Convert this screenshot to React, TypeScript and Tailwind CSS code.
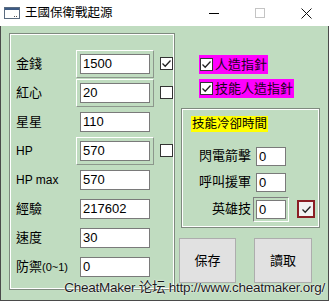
import React from "react";

const cjk = "font-['Liberation_Sans','Noto_Sans_CJK_TC',sans-serif]";

type Row = {
  label: string;
  suffix?: string;
  value: string;
  frame?: boolean;
  check?: "on" | "off";
  latin?: boolean;
};

const rows: Row[] = [
  { label: "金錢", value: "1500", frame: true, check: "on" },
  { label: "紅心", value: "20", frame: true, check: "off" },
  { label: "星星", value: "110" },
  { label: "HP", value: "570", frame: true, check: "off", latin: true },
  { label: "HP max", value: "570", latin: true },
  { label: "經驗", value: "217602" },
  { label: "速度", value: "30" },
  { label: "防禦", suffix: "(0~1)", value: "0" },
];

function Tick() {
  return (
    <svg width="11" height="11" viewBox="0 0 11 11">
      <polyline points="1.5,5.5 4.2,8.2 9.5,2.5" fill="none" stroke="#222" strokeWidth="1.3" />
    </svg>
  );
}

function CheckBox({ on }: { on: boolean }) {
  return (
    <div className="w-[13px] h-[13px] bg-white border border-[#333] flex items-center justify-center">
      {on && <Tick />}
    </div>
  );
}

function TitleBar() {
  return (
    <div className="h-[26px] bg-white flex items-center shrink-0">
      <svg width="16" height="12" viewBox="0 0 16 12" className="ml-[4px]">
        <rect x="0.5" y="0.5" width="15" height="11" fill="#fff" stroke="#5a6b80" />
        <rect x="1" y="1" width="14" height="2" fill="#3c5a84" />
        <rect x="10" y="9" width="1" height="1" fill="#555" />
        <rect x="12" y="9" width="1" height="1" fill="#555" />
      </svg>
      <span className={`ml-[5px] text-[12.5px] text-black ${cjk}`}>王國保衛戰起源</span>
      <div className="ml-auto flex items-center">
        <div className="w-[46px] h-[26px] flex items-center justify-center">
          <div className="w-[10px] h-[1px] bg-black" />
        </div>
        <div className="w-[46px] h-[26px] flex items-center justify-center">
          <div className="w-[10px] h-[10px] border border-[#c4c4c4]" />
        </div>
        <div className="w-[46px] h-[26px] flex items-center justify-center">
          <svg width="11" height="11" viewBox="0 0 11 11">
            <path d="M0.5 0.5 L10.5 10.5 M10.5 0.5 L0.5 10.5" stroke="#111" strokeWidth="1" />
          </svg>
        </div>
      </div>
    </div>
  );
}

function LeftPanel() {
  return (
    <div className="w-[166px] h-[257px] border border-[#7f8a7f] shrink-0">
      <div className="h-full border border-white pl-[5px] pt-[14px]">
        {rows.map((r) => (
          <div key={r.label} className="h-[29px] flex items-center">
            <div
              className={`w-[60px] text-black whitespace-nowrap ${cjk} ${
                r.latin ? "text-[12px]" : "text-[13px]"
              }`}
            >
              {r.label}
              {r.suffix && <span className="text-[11px]">{r.suffix}</span>}
            </div>
            <div
              className={`p-[3px] border ${
                r.frame
                  ? "border-t-white border-l-white border-r-[#8c978c] border-b-[#8c978c]"
                  : "border-transparent"
              }`}
            >
              <div className="w-[70px] h-[20px] bg-white border border-[#7a7a7a] pl-[2px] text-[13px] leading-[18px] font-['Liberation_Sans',sans-serif] text-black">
                {r.value}
              </div>
            </div>
            {r.check && (
              <div className="ml-[6px]">
                <CheckBox on={r.check === "on"} />
              </div>
            )}
          </div>
        ))}
      </div>
    </div>
  );
}

function MagentaCheck({ text, className }: { text: string; className?: string }) {
  return (
    <div className={`self-start h-[19px] bg-[#ff00ff] flex items-center pl-[1px] pr-[1px] ${className ?? ""}`}>
      <CheckBox on />
      <span className={`ml-[2px] text-[13px] text-[#1a001a] ${cjk}`}>{text}</span>
    </div>
  );
}

const groupRows = [
  { label: "閃電箭擊", h: "h-[26px]", frame: false },
  { label: "呼叫援軍", h: "h-[26px]", frame: false },
  { label: "英雄技", h: "h-[28px]", frame: true },
];

function CooldownGroup() {
  return (
    <div className="ml-[2px] w-[139px] h-[120px] mt-[10px] border border-[#7f8a7f]">
      <div className="h-full border border-white">
        <div className="pl-[8px]">
          <span className={`inline-block h-[16px] leading-[16px] bg-[#ffff00] px-[1px] text-[12.5px] text-black ${cjk}`}>
            技能冷卻時間
          </span>
        </div>
        <div className="mt-[9px]">
          {groupRows.map((g) => (
            <div key={g.label} className={`${g.h} flex items-center`}>
              <div className={`w-[68px] text-right text-[13px] text-black ${cjk}`}>{g.label}</div>
              <div
                className={`ml-[2px] p-[2px] border ${
                  g.frame
                    ? "border-t-[#808080] border-l-[#808080] border-r-white border-b-white"
                    : "border-transparent"
                }`}
              >
                <div className="w-[30px] h-[19px] bg-white border border-[#7a7a7a] pl-[2px] text-[13px] leading-[17px] font-['Liberation_Sans',sans-serif] text-black">
                  0
                </div>
              </div>
              {g.frame && (
                <div className="ml-[8px] w-[18px] h-[18px] border-2 border-[#8b1e24] bg-[#f2f2f2] flex items-center justify-center">
                  <Tick />
                </div>
              )}
            </div>
          ))}
        </div>
      </div>
    </div>
  );
}

function RightColumn() {
  return (
    <div className="ml-[4px] w-[141px] flex flex-col">
      <div className="mt-[22px] ml-[20px] flex flex-col">
        <MagentaCheck text="人造指針" />
        <MagentaCheck text="技能人造指針" className="mt-[5px]" />
      </div>
      <CooldownGroup />
      <div className="mt-[10px] flex">
        <button className={`w-[57px] h-[45px] bg-[#e1e1e1] border border-[#adadad] text-[13px] text-black ${cjk}`}>
          保存
        </button>
        <button className={`ml-[18px] w-[58px] h-[45px] bg-[#e1e1e1] border border-[#adadad] text-[13px] text-black ${cjk}`}>
          讀取
        </button>
      </div>
    </div>
  );
}

export default function App() {
  return (
    <div className="relative w-[329px] h-[301px] flex flex-col overflow-hidden bg-[#c0dcc0]">
      <TitleBar />
      <div className="flex-1 flex pl-[8px] pt-[7px] border-x border-b border-[#4a4a4a]">
        <LeftPanel />
        <RightColumn />
      </div>
      <div className="absolute right-[4px] bottom-[3px] text-[13.5px] tracking-[-0.25px] text-[#1a1a1a] whitespace-nowrap font-['Liberation_Sans','Noto_Sans_CJK_SC',sans-serif] [text-shadow:0_0_2px_#fff,0_0_1px_#fff]">
        CheatMaker 论坛 http://www.cheatmaker.org/
      </div>
    </div>
  );
}
